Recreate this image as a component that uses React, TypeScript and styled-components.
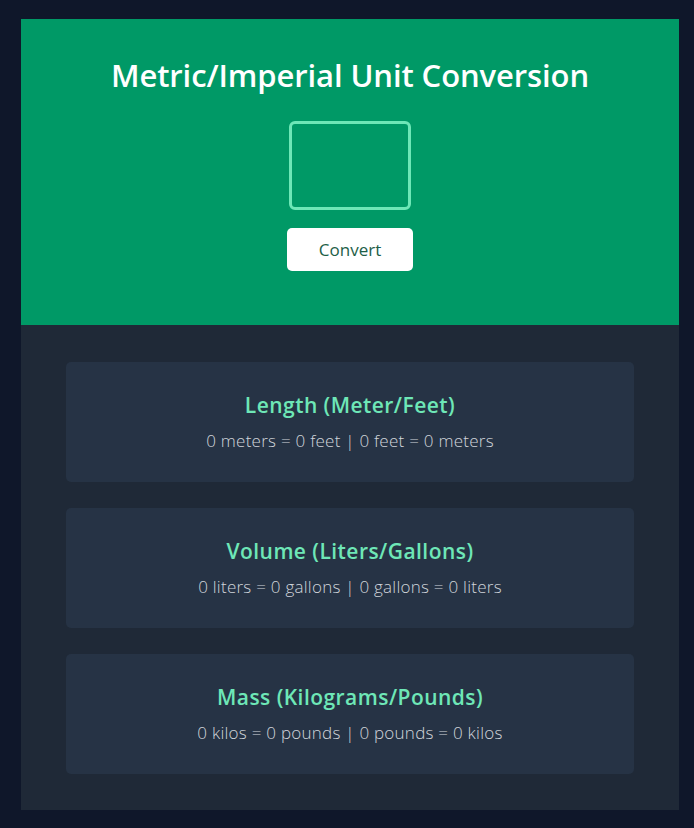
import React from 'react'
import styled, { createGlobalStyle } from 'styled-components'

const GlobalStyle = createGlobalStyle`
  body {
    margin: 0;
    background-color: #0f172a;
    font-family: 'Open Sans', 'Noto Sans', sans-serif;
  }
`

/* PAGE STYLES */
const Wrapper = styled.div`
  margin: 19px 15px 18px 21px;
  height: 791px;
  display: flex;
  flex-direction: column;
  background-color: #1f2937;
`

const Header = styled.div`
  height: 306px;
  box-sizing: border-box;
  padding-top: 36px;
  background-color: #009966;
  display: flex;
  flex-direction: column;
  align-items: center;
`

const Title = styled.h1`
  margin: 0;
  color: #ffffff;
  font-size: 31px;
  line-height: 40px;
  font-weight: 600;
  letter-spacing: -0.1px;
`

const ValueInput = styled.input`
  margin-top: 26px;
  width: 122px;
  height: 89px;
  box-sizing: border-box;
  border: 3px solid #6ee7b7;
  border-radius: 6px;
  background: transparent;
  color: #ffffff;
  font-size: 24px;
  text-align: center;
  outline: none;
`

const ConvertButton = styled.button`
  margin-top: 18px;
  width: 126px;
  height: 43px;
  border: none;
  border-radius: 5px;
  background-color: #ffffff;
  color: #1d5e48;
  font-family: inherit;
  font-size: 17px;
  cursor: pointer;
`

const Results = styled.div`
  flex: 1;
  padding: 37px 45px 0 45px;
  display: flex;
  flex-direction: column;
  gap: 26px;
`

/* CARD STYLES */
const Card = styled.div`
  height: 120px;
  border-radius: 5px;
  background-color: #263345;
  display: flex;
  flex-direction: column;
  align-items: center;
  justify-content: center;
  gap: 10px;
`

const CardTitle = styled.h2`
  margin: 0;
  color: #6ee7b7;
  font-size: 21px;
  line-height: 28px;
  font-weight: 600;
  letter-spacing: 0.45px;
`

const CardText = styled.p`
  margin: 0;
  color: #d1d5db;
  font-size: 17px;
  line-height: 24px;
  font-weight: 300;
  letter-spacing: 0.25px;
`

const conversions = [
  { title: 'Length (Meter/Feet)', text: '0 meters = 0 feet | 0 feet = 0 meters' },
  { title: 'Volume (Liters/Gallons)', text: '0 liters = 0 gallons | 0 gallons = 0 liters' },
  { title: 'Mass (Kilograms/Pounds)', text: '0 kilos = 0 pounds | 0 pounds = 0 kilos' },
]

/* COMPONENTS */
const App: React.FC = () => {
  return (
    <>
      <GlobalStyle />
      <Wrapper>
        <Header>
          <Title>Metric/Imperial Unit Conversion</Title>
          <ValueInput type="text" />
          <ConvertButton>Convert</ConvertButton>
        </Header>
        <Results>
          {conversions.map((c) => (
            <Card key={c.title}>
              <CardTitle>{c.title}</CardTitle>
              <CardText>{c.text}</CardText>
            </Card>
          ))}
        </Results>
      </Wrapper>
    </>
  )
}

export default App
